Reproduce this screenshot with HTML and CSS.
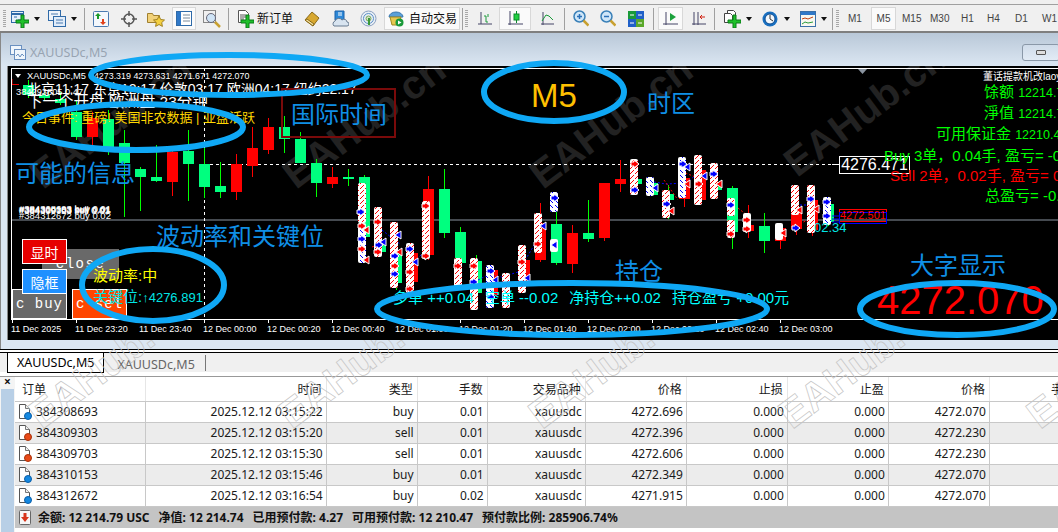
FILE: index.html
```html
<!DOCTYPE html>
<html lang="zh">
<head>
<meta charset="utf-8">
<title>XAUUSDc,M5</title>
<link rel="stylesheet" href="styles.css">
</head>
<body>
<svg class="defs" width="0" height="0">
  <defs>
    <pattern id="rh" width="5" height="5" patternUnits="userSpaceOnUse"><rect width="5" height="5" fill="#fff"/><path d="M0 3h1V2h1V1h1V0h1v1H3v1H2v1H1v1H0z" fill="#f00"/></pattern>
    <pattern id="bh" width="5" height="5" patternUnits="userSpaceOnUse"><rect width="5" height="5" fill="#fff"/><path d="M0 0h1v1h1v1h1v1H2V2H1V1H0z" fill="#00f"/></pattern>
    <path id="ab" d="M0 2h3V0l5 4-5 4V6H0z" fill="#00f" stroke="#fff"/>
    <path id="ar" d="M0 2h3V0l5 4-5 4V6H0z" fill="#f00" stroke="#fff"/>
    <path id="lb" d="M6 0v8L0 4z" fill="#00f" stroke="#fff"/>
    <path id="lr" d="M6 0v8L0 4z" fill="#f00" stroke="#fff"/>
    <symbol id="doc-b" viewBox="0 0 14 16"><path d="M1.5.5h6l4 4v8a2 2 0 0 1-2 2h-8z" fill="#fff" stroke="#555"/><path d="M7.500.5v4h4" fill="#eee" stroke="#777"/><circle cx="10" cy="12" r="3.500" fill="#1588e0" stroke="#0a5ea8"/></symbol>
    <symbol id="doc-r" viewBox="0 0 14 16"><path d="M1.5.5h6l4 4v8a2 2 0 0 1-2 2h-8z" fill="#fff" stroke="#555"/><path d="M7.500.5v4h4" fill="#eee" stroke="#777"/><circle cx="10" cy="12" r="3.500" fill="#e84a18" stroke="#a83008"/></symbol>
    <path id="plus" d="M5 0h3v5h5v3H8v5H5V8H0V5h5z" fill="#1fc02a" stroke="#0a7a18"/>
  </defs>
</svg>
<div class="app">
  <header class="toolbar">
    <span class="grip ml3"></span>
    <svg class="ml5" width="18" height="18" viewBox="0 0 18 18"><rect x=".5" y="1.500" width="12" height="11" fill="#e6f0fb" stroke="#2f6aa8"/><path d="M1 4h11" stroke="#2f6aa8" stroke-width="2"/><path d="M3 7h3M7 10h3" stroke="#2f6aa8"/><use href="#plus" x="5" y="5"/></svg>
    <span class="drop ml5"></span>
    <svg class="ml8" width="18" height="18" viewBox="0 0 18 18"><rect x=".5" y=".5" width="12" height="10" fill="#eef4fb" stroke="#2f6aa8"/><rect x="5.500" y="6.500" width="12" height="10" fill="#e0ecf9" stroke="#2f6aa8"/><path d="M3 4h7M8 10h7M8 13h7" stroke="#4a7ab0"/></svg>
    <span class="drop ml5"></span>
    <span class="sep ml7"></span>
    <svg class="ml8" width="16" height="16" viewBox="0 0 16 16"><rect x=".5" y=".5" width="15" height="15" rx="1" fill="#f4f8fc" stroke="#4a7ab0"/><path d="M5 2l3 3H6v3H4V5H2z" fill="#1a9a2a"/><path d="M10 14l-3-3h2V8h2v3h2z" fill="#e0401a"/></svg>
    <svg class="ml12" width="16" height="16" viewBox="0 0 16 16"><circle cx="8" cy="8" r="5" fill="none" stroke="#555" stroke-width="1.500"/><path d="M8 0v5M8 11v5M0 8h5M11 8h5" stroke="#555" stroke-width="1.500"/></svg>
    <svg class="ml10" width="18" height="18" viewBox="0 0 18 18"><path d="M.5 3.500h5l1 2h6v7H.5z" fill="#f2d27a" stroke="#a08030"/><path d="M12 6l1.700 3.500 3.800.5-2.800 2.600.7 3.800-3.400-1.900-3.400 1.900.7-3.800L6.500 10l3.800-.5z" fill="#f4d040" stroke="#a08020"/></svg>
    <span class="active-box ml7 w24"><svg width="16" height="15" viewBox="0 0 16 15"><rect x=".5" y=".5" width="15" height="14" fill="#fff" stroke="#2f6aa8"/><rect x="1" y="1" width="4" height="13" fill="#2f78c8"/><path d="M7 4h7M7 7h7M7 10h7" stroke="#7a8a9a"/></svg></span>
    <svg class="ml7" width="18" height="18" viewBox="0 0 18 18"><rect x=".5" y=".5" width="12" height="12" fill="#f0f0f0" stroke="#888"/><circle cx="8" cy="8" r="4.500" fill="#cfe4f6" stroke="#667"/><path d="M12 12l5 5" stroke="#c8a030" stroke-width="2.500"/></svg>
    <span class="sep ml7"></span>
    <svg class="ml8" width="17" height="18" viewBox="0 0 17 18"><path d="M1.500.5h7l3 3v9h-10z" fill="#fff" stroke="#555"/><path d="M3 5h6M3 7h6M3 9h4" stroke="#555"/><use href="#plus" x="4" y="5"/></svg>
    <span class="tb-text ml3">新订单</span>
    <svg class="ml11" width="16" height="16" viewBox="0 0 16 16"><path d="M1 9l7-8 7 6-6 8z" fill="#d8a830" stroke="#8a6a18"/><path d="M1 9l8 6 1-2-7-5z" fill="#f2e0a0" stroke="#8a6a18"/></svg>
    <svg class="ml12" width="17" height="18" viewBox="0 0 17 18"><path d="M3 1h9v9H3z" fill="#2c88d8" stroke="#1a60a8"/><path d="M6 3h4M6 5h4" stroke="#fff"/><path d="M2 16a3 3 0 0 1 1-5 4 4 0 0 1 7-1 3 3 0 0 1 5 2 2 2 0 0 1 0 4z" fill="#d8e4f0" stroke="#667a90"/></svg>
    <svg class="ml11" width="17" height="17" viewBox="0 0 17 17"><circle cx="8.500" cy="8.500" r="7.500" fill="#e8eef4" stroke="#8aa0c0"/><circle cx="8.500" cy="8.500" r="5" fill="none" stroke="#5a90c8"/><circle cx="8.500" cy="8.500" r="2.500" fill="#cfe0c0" stroke="#7aa860"/><path d="M9 8v7" stroke="#3a9a3a" stroke-width="2"/></svg>
    <span class="auto-box ml7">
      <svg width="16" height="17" viewBox="0 0 16 17"><path d="M1 7a7 5 0 0 1 14 0z" fill="#5aa0d8" stroke="#3a78b0"/><path d="M2 7l2 8h7l2-8z" fill="#e8c850" stroke="#a08a20"/><circle cx="11.500" cy="12.500" r="4" fill="#1a9a3a"/><path d="M10 10.500l3.500 2-3.500 2z" fill="#fff"/></svg>
      <span class="tb-text ml5">自动交易</span>
    </span>
    <span class="sep ml2"></span>
    <span class="grip ml2"></span>
    <svg class="ml10" width="14" height="16" viewBox="0 0 14 16"><path d="M3 1v12M0 13h14" stroke="#446" fill="none"/><path d="M6 5h2v6h2M10 3v3" stroke="#1a9a3a" fill="none"/></svg>
    <span class="active-box ml7 w32"><svg width="15" height="17" viewBox="0 0 15 17"><path d="M2 1v14M0 14h15" stroke="#446" fill="none"/><path d="M8.500 1v12" stroke="#0a8a2a"/><rect x="6" y="4" width="5" height="6" fill="#20d040" stroke="#0a8a2a"/></svg></span>
    <svg class="ml10" width="13" height="16" viewBox="0 0 13 16"><path d="M2 1v13M0 13h13" stroke="#446" fill="none"/><path d="M1 10l4-6 3 1 4 4" stroke="#1a9a3a" fill="none"/></svg>
    <span class="sep ml10"></span>
    <svg class="ml8" width="16" height="17" viewBox="0 0 16 17"><circle cx="6.500" cy="6.500" r="5.500" fill="#cfe6f8" stroke="#3a80b8" stroke-width="1.500"/><path d="M4 6.500h5M6.500 4v5" stroke="#2a70b8" stroke-width="1.500"/><path d="M10.500 10.500l5 5" stroke="#c8a030" stroke-width="2.500"/></svg>
    <svg class="ml11" width="16" height="17" viewBox="0 0 16 17"><circle cx="6.500" cy="6.500" r="5.500" fill="#cfe6f8" stroke="#3a80b8" stroke-width="1.500"/><path d="M4 6.500h5" stroke="#2a70b8" stroke-width="1.500"/><path d="M10.500 10.500l5 5" stroke="#c8a030" stroke-width="2.500"/></svg>
    <svg class="ml12" width="16" height="16" viewBox="0 0 16 16"><rect width="8" height="8" fill="#1a9a3a"/><rect x="8" width="8" height="8" fill="#2060c8"/><rect y="8" width="8" height="8" fill="#2060c8"/><rect x="8" y="8" width="8" height="8" fill="#5aa82a"/><path d="M2 4h4M10 4h4M2 12h4M10 12h4" stroke="#fff"/></svg>
    <span class="sep ml9"></span>
    <span class="active-box ml4 w25"><svg width="15" height="16" viewBox="0 0 15 16"><path d="M3 1v13M0 13h15" stroke="#446" fill="none"/><path d="M7 2l6 4-6 4z" fill="#1aa03a"/></svg></span>
    <svg class="ml9" width="14" height="16" viewBox="0 0 14 16"><path d="M2 1v13M6 1v13M0 13h14" stroke="#446" fill="none"/><path d="M13 6H9M10 4L8 6l2 2" stroke="#d02010" fill="none"/></svg>
    <span class="sep ml8"></span>
    <svg class="ml9" width="17" height="18" viewBox="0 0 17 18"><path d="M3.500.5h6l2 2v10h-8z" fill="#fff" stroke="#444"/><path d="M.5 3.500h6l2 2v7h-8z" fill="#fff" stroke="#444"/><use href="#plus" x="4" y="5"/></svg>
    <span class="drop ml5"></span>
    <svg class="ml10" width="16" height="16" viewBox="0 0 16 16"><circle cx="8" cy="8" r="7.500" fill="#1a70c0"/><circle cx="8" cy="8" r="5" fill="#f4f8fc" stroke="#0a4a90"/><path d="M8 4v4l3 2" stroke="#333" fill="none"/></svg>
    <span class="drop ml6"></span>
    <svg class="ml10" width="16" height="16" viewBox="0 0 16 16"><rect x=".5" y=".5" width="15" height="15" fill="#f8f8f0" stroke="#3a70a8"/><rect x="1" y="1" width="14" height="3" fill="#2f78c8"/><path d="M2 8l3-1 3 1 5-2" stroke="#c04010" fill="none"/><path d="M2 13l3-2 3 1 5-1" stroke="#2a9a3a" fill="none"/></svg>
    <span class="drop ml5"></span>
    <span class="sep ml5"></span>
    <span class="grip ml3"></span>
    <nav class="periods">
      <span class="per p-m1">M1</span>
      <span class="per per-on">M5</span>
      <span class="per p-m15">M15</span>
      <span class="per p-m30">M30</span>
      <span class="per p-h1">H1</span>
      <span class="per p-h4">H4</span>
      <span class="per p-d1">D1</span>
      <span class="per p-w1">W1</span>
    </nav>
  </header>

  <section class="mdi">
    <div class="titlebar">
      <svg width="16" height="15" viewBox="0 0 16 15"><rect x=".5" y=".5" width="11" height="9" fill="#f0f6fc" stroke="#6a90c0"/><rect x="4.500" y="4.500" width="11" height="10" fill="#f0f6fc" stroke="#6a90c0"/><path d="M6 11l2-2 2 3 2-3 2 2" stroke="#6a90c0" fill="none"/></svg>
      <span class="win-title">XAUUSDc,M5</span>
      <span class="win-btn"><i></i></span>
    </div>
    <div class="chart">
      <svg class="canvas" viewBox="8 66 1050 274" width="1050" height="274">
        <g class="wm-dark">
          <text transform="translate(43 190) rotate(-37)">EAHub.cn</text>
          <text transform="translate(296 190) rotate(-37)">EAHub.cn</text>
          <text transform="translate(543 190) rotate(-37)">EAHub.cn</text>
          <text transform="translate(797 178) rotate(-37)">EAHub.cn</text>
        </g>
        <path d="M11 220H1058" stroke="#8a94a0" fill="none"/>
        <path d="M204.500 68V319M204 164.500H832" stroke="#fff" stroke-dasharray="3 3" fill="none"/>
        <path d="M832 164.500h8" stroke="#fff"/>
        <path d="M858 69h9l-4.500 5z" fill="#8a94a0"/>
        <path d="M12 84.500h7M12 84V79" stroke="#e00" fill="none"/>
        <path class="wick-g" d="M28.500 80V98M44.500 92V100M60.500 92V105M76.500 100V140M108.500 110V155M124.500 130V217M140.500 167V211M156.500 145V182M188.500 130V201M204.500 148V198M220.500 162V198M284.500 116V153M300.500 132V163M316.500 159V197M348.500 169V186M364.500 175V240M380.500 235V255M396.500 240V290M444.500 169V238M460.500 227V270M476.500 255V296M556.500 208V265M588.500 200V242M668.500 185V219M732.500 186V249M764.500 213V253M828.500 200V226"/>
        <path class="wick-r" d="M92.500 112V146M172.500 150V196M236.500 154V200M252.500 127V177M268.500 118V154M332.500 167V188M412.500 245V285M428.500 176V260M492.500 265V300M524.500 255V290M540.500 203V262M572.500 225V273M604.500 183V241M620.500 160V192M684.500 175V207M700.500 165V205M748.500 205V238M780.500 225V249M796.500 200V235M812.500 195V236"/>
        <path class="body-g" d="M23 85h11v10H23zM39 95h11v3H39zM55 99h11v4H55zM71 112h11v25H71zM103 119h11v32h-11zM119 143h11v20h-11zM135 169h11v8h-11zM151 177h11v4h-11zM183 151h11v13h-11zM199 164h11v23h-11zM215 186h11v6h-11zM279 127h11v12h-11zM295 139h11v24h-11zM311 163h11v20h-11zM343 177h11v2h-11zM359 177h11v60h-11zM375 243h11v9h-11zM391 250h11v33h-11zM439 189h11v44h-11zM455 232h11v31h-11zM471 261h11v32h-11zM551 224h11v39h-11zM583 233h11v6h-11zM631 179h11v5h-11zM647 183h11v12h-11zM663 194h11v6h-11zM711 182h11v8h-11zM727 188h11v44h-11zM759 226h11v15h-11zM823 204h11v18h-11z"/>
        <path class="body-r" d="M87 118h11v19H87zM167 152h11v30h-11zM231 164h11v28h-11zM247 148h11v18h-11zM263 127h11v23h-11zM327 177h11v7h-11zM407 253h11v29h-11zM423 189h11v66h-11zM487 270h11v25h-11zM519 260h11v23h-11zM535 223h11v37h-11zM567 233h11v31h-11zM599 183h11v55h-11zM615 179h11v5h-11zM679 178h11v21h-11zM695 170h11v30h-11zM743 225h11v6h-11zM775 228h11v13h-11zM791 210h11v19h-11zM807 200h11v30h-11z"/>
        <path class="dash-b" d="M382 230l10 8 8 6M414 262l10-10M478 280l10-5 14 2 16-5 18-30M654 182l12 2 20-1 10-8M800 205h14l10 6"/>
        <path class="dash-r" d="M372 247l8-3M678 170l20 8M664 180l14 20M738 208l10 8M800 224l14-8"/>
        <g>
          <rect class="h-r" x="358" y="183" width="8" height="40" rx="2"/><rect class="h-b" x="358" y="223" width="8" height="40" rx="2"/>
          <use href="#ab" x="357" y="208"/><use href="#ar" x="358" y="222"/><use href="#lr" x="363" y="226"/><use href="#ab" x="358" y="235"/><use href="#ar" x="358" y="245"/><use href="#lr" x="363" y="256"/>
          <rect class="h-r" x="374" y="207" width="8" height="50" rx="2"/><use href="#ar" x="374" y="218"/><use href="#ab" x="375" y="241"/><use href="#lb" x="380" y="238"/><use href="#ar" x="374" y="248"/>
          <rect class="h-r" x="390" y="222" width="8" height="66" rx="2"/><use href="#lb" x="395" y="231"/><use href="#ab" x="391" y="252"/><use href="#lr" x="396" y="248"/><use href="#ar" x="391" y="262"/><use href="#ab" x="391" y="270"/>
          <rect class="h-r" x="406" y="243" width="8" height="53" rx="2"/><use href="#ab" x="406" y="245"/><use href="#lb" x="412" y="258"/><use href="#ar" x="406" y="268"/><use href="#ar" x="406" y="285"/>
          <rect class="h-r" x="422" y="201" width="8" height="58" rx="2"/><use href="#ar" x="422" y="202"/><use href="#ar" x="422" y="252"/>
          <rect class="h-r" x="454" y="258" width="8" height="29" rx="2"/><use href="#ar" x="454" y="262"/>
          <rect class="h-r" x="470" y="258" width="8" height="52" rx="2"/><use href="#ab" x="470" y="278"/><use href="#ar" x="470" y="262"/>
          <rect class="h-b" x="486" y="265" width="8" height="43" rx="2"/><use href="#ab" x="487" y="267"/><use href="#lb" x="492" y="276"/><use href="#ab" x="487" y="293"/>
          <rect class="h-r" x="502" y="273" width="8" height="35" rx="2"/>
          <rect class="h-r" x="518" y="245" width="8" height="48" rx="2"/><use href="#lb" x="524" y="274"/><use href="#ar" x="518" y="258"/>
          <rect class="h-r" x="534" y="213" width="8" height="40" rx="2"/><use href="#lb" x="540" y="222"/><use href="#ar" x="534" y="240"/>
          <rect class="h-b" x="550" y="192" width="8" height="20" rx="2"/><use href="#ab" x="551" y="194"/>
          <rect class="h-w" x="550" y="239" width="8" height="13" rx="2"/><use href="#lb" x="551" y="241"/>
          <rect class="h-r" x="630" y="159" width="8" height="36" rx="2"/><use href="#ab" x="631" y="186"/><use href="#ar" x="631" y="160"/>
          <rect class="h-b" x="646" y="177" width="8" height="19" rx="2"/><use href="#lb" x="652" y="184"/>
          <rect class="h-r" x="662" y="190" width="8" height="28" rx="2"/><use href="#ab" x="663" y="200"/><use href="#lr" x="668" y="207"/>
          <rect class="h-b" x="678" y="157" width="8" height="41" rx="2"/><use href="#ab" x="679" y="160"/><use href="#lb" x="684" y="163"/><use href="#lr" x="684" y="180"/>
          <rect class="h-r" x="694" y="155" width="8" height="50" rx="2"/><use href="#lb" x="701" y="172"/><use href="#ar" x="695" y="180"/>
          <rect class="h-r" x="710" y="163" width="8" height="36" rx="2"/><use href="#lr" x="716" y="180"/><use href="#ab" x="710" y="170"/>
          <rect class="h-r" x="727" y="198" width="8" height="18" rx="2"/><use href="#ab" x="727" y="201"/>
          <rect class="h-r" x="727" y="220" width="8" height="18" rx="2"/><use href="#ar" x="727" y="230"/>
          <rect class="h-w" x="743" y="213" width="8" height="19" rx="2"/><use href="#ar" x="743" y="216"/><use href="#ar" x="743" y="225"/>
          <rect class="h-w" x="775" y="223" width="8" height="17" rx="2"/><use href="#lr" x="780" y="229"/>
          <rect class="h-r" x="791" y="185" width="8" height="30" rx="2"/><use href="#ab" x="792" y="224"/><use href="#lr" x="796" y="206"/>
          <rect class="h-r" x="807" y="185" width="8" height="48" rx="2"/><use href="#lr" x="813" y="205"/><use href="#ab" x="807" y="195"/>
          <rect class="h-b" x="823" y="197" width="8" height="28" rx="2"/><use href="#ab" x="823" y="198"/><use href="#ab" x="823" y="212"/>
        </g>
        <path d="M832 216h8M832 219h8M832 222h8" stroke="#00f"/>
        <rect x="839.500" y="209.500" width="47" height="12" fill="none" stroke="#f00"/>
        <rect x="839.500" y="212.500" width="47" height="11" fill="none" stroke="#00f"/>
      </svg>

      <div class="frame"></div>
      <div class="lbl head"><span>XAUUSDc,M5</span><span class="ohlc">4273.319 4273.631 4271.671 4272.070</span></div>
      <div class="lbl clock">北京11:17 东京12:17 伦敦03:17 欧洲04:17 纽约22:17</div>
      <div class="lbl mini">384293805 0.47</div>
      <div class="lbl next">下一个开盘 欧洲盘 23分钟</div>
      <div class="lbl news">今日事件: 重磅! 美国非农数据 | 亚盘活跃</div>
      <div class="orders">
        <span class="ord o1">#384308693 buy 0.01</span>
        <span class="ord o2">#384309303 sell 0.01</span>
        <span class="ord o3">#384309703 sell 0.01</span>
        <span class="ord o4">#384310153 buy 0.01</span>
        <span class="ord o5">#384312672 buy 0.02</span>
      </div>
      <div class="lbl hl-price">4276.471</div>
      <div class="lbl red-price">4272.501</div>
      <div class="lbl small-cy">02.34</div>

      <button class="cbtn b-close">close</button>
      <button class="cbtn b-buy">c buy</button>
      <button class="cbtn b-sell">c sel</button>
      <button class="cbtn b-time">显时</button>
      <button class="cbtn b-frame">隐框</button>

      <div class="lbl vol">波动率:中</div>
      <div class="lbl key">关键位:<span class="key-num">↑4276.891</span></div>
      <div class="lbl pos"><span>多单 ++0.04</span><span>空单 --0.02</span><span>净持仓++0.02</span><span>持仓盈亏 +0.00元</span></div>

      <div class="panel">
        <div class="pl pl-white">董话提款机改laoyu</div>
        <div class="pl pl1">馀额 <span class="d">12214.79</span></div>
        <div class="pl pl2">淨值 <span class="d">12214.74</span></div>
        <div class="pl pl3">可用保证金 <span class="d">12210.47</span></div>
        <div class="pl pl4">Buy 3单，0.04手, 盈亏= -0.04</div>
        <div class="pl pl5">Sell 2单，0.02手, 盈亏= 0.01</div>
        <div class="pl pl6">总盈亏= -0.03</div>
      </div>

      <div class="lbl big">4272.070</div>

      <div class="lbl note n-intl">国际时间</div>
      <div class="intl-box"></div>
      <div class="lbl note n-info">可能的信息</div>
      <div class="lbl note n-vol">波动率和关键位</div>
      <div class="lbl note n-pos">持仓</div>
      <div class="lbl note n-big">大字显示</div>
      <div class="lbl note n-zone">时区</div>
      <div class="lbl n-m5">M5</div>

      <div class="axis">
        <span>11 Dec 2025</span><span>11 Dec 23:20</span><span>11 Dec 23:40</span><span>12 Dec 00:00</span><span>12 Dec 00:20</span><span>12 Dec 00:40</span><span>12 Dec 01:00</span><span>12 Dec 01:20</span><span>12 Dec 01:40</span><span>12 Dec 02:00</span><span>12 Dec 02:20</span><span>12 Dec 02:40</span><span>12 Dec 03:00</span>
      </div>
    </div>
    <div class="strip"></div>
  </section>

  <section class="lower">
    <div class="tabs">
      <span class="tab tab-on">XAUUSDc,M5</span>
      <span class="tab">XAUUSDc,M5</span>
    </div>
    <div class="terminal">
      <aside class="side"><span class="close-x">×</span><div class="side-bar"></div></aside>
      <div class="tbl-wrap">
        <table class="tbl">
          <colgroup><col class="c1"><col class="c2"><col class="c3"><col class="c4"><col class="c5"><col class="c6"><col class="c6"><col class="c6"><col class="c6"><col class="c10"></colgroup>
          <thead>
            <tr><th class="l">订单<span class="sort">/</span></th><th>时间</th><th>类型</th><th>手数</th><th>交易品种</th><th>价格</th><th>止损</th><th>止盈</th><th>价格</th><th>手数</th></tr>
          </thead>
          <tbody>
            <tr><td class="l"><svg class="doc" width="14" height="16"><use href="#doc-b"/></svg>384308693</td><td>2025.12.12 03:15:22</td><td>buy</td><td>0.01</td><td>xauusdc</td><td>4272.696</td><td>0.000</td><td>0.000</td><td>4272.070</td><td></td></tr>
            <tr><td class="l"><svg class="doc" width="14" height="16"><use href="#doc-r"/></svg>384309303</td><td>2025.12.12 03:15:20</td><td>sell</td><td>0.01</td><td>xauusdc</td><td>4272.396</td><td>0.000</td><td>0.000</td><td>4272.230</td><td></td></tr>
            <tr><td class="l"><svg class="doc" width="14" height="16"><use href="#doc-r"/></svg>384309703</td><td>2025.12.12 03:15:30</td><td>sell</td><td>0.01</td><td>xauusdc</td><td>4272.606</td><td>0.000</td><td>0.000</td><td>4272.230</td><td></td></tr>
            <tr><td class="l"><svg class="doc" width="14" height="16"><use href="#doc-b"/></svg>384310153</td><td>2025.12.12 03:15:46</td><td>buy</td><td>0.01</td><td>xauusdc</td><td>4272.349</td><td>0.000</td><td>0.000</td><td>4272.070</td><td></td></tr>
            <tr><td class="l"><svg class="doc" width="14" height="16"><use href="#doc-b"/></svg>384312672</td><td>2025.12.12 03:16:54</td><td>buy</td><td>0.02</td><td>xauusdc</td><td>4271.915</td><td>0.000</td><td>0.000</td><td>4272.070</td><td></td></tr>
          </tbody>
        </table>
        <div class="summary">
          <svg width="12" height="15" viewBox="0 0 12 15"><rect x=".5" y=".5" width="11" height="14" rx="1" fill="#f6f6f6" stroke="#666"/><path d="M4.500 3h3v4H10l-4 5-4-5h2.500z" fill="#d8341a"/></svg>
          <b>余额: 12 214.79 USC</b><b>净值: 12 214.74</b><b>已用预付款: 4.27</b><b>可用预付款: 12 210.47</b><b>预付款比例: 285906.74%</b>
        </div>
      </div>
    </div>
  </section>

  <svg class="wm-light" viewBox="0 340 1058 192" width="1058" height="192">
    <text transform="translate(42 430) rotate(-37)">EAHub.cn</text>
    <text transform="translate(292 430) rotate(-37)">EAHub.cn</text>
    <text transform="translate(542 430) rotate(-37)">EAHub.cn</text>
    <text transform="translate(792 430) rotate(-37)">EAHub.cn</text>
    <text transform="translate(1040 430) rotate(-37)">EAHub.cn</text>
  </svg>
  <svg class="ovals" viewBox="0 0 1058 532" width="1058" height="532">
    <ellipse cx="229" cy="75" rx="138" ry="20"/>
    <ellipse cx="136" cy="127" rx="107" ry="23"/>
    <ellipse cx="153" cy="285" rx="71" ry="36"/>
    <ellipse cx="554" cy="92" rx="70" ry="29"/>
    <ellipse cx="572" cy="309" rx="195" ry="26"/>
    <ellipse cx="957" cy="309" rx="97" ry="26"/>
  </svg>
</div>
</body>
</html>
```

FILE: styles.css
```css
* { box-sizing: border-box; }
html, body { margin: 0; padding: 0; }
body { width: 1058px; height: 532px; overflow: hidden; background: #fff; font-family: "Noto Sans", "Noto Sans CJK SC", sans-serif; }
.defs { position: absolute; }
.app { position: relative; width: 1058px; height: 532px; overflow: hidden; display: flex; flex-direction: column; background: #f0f0f0; }

/* toolbar */
.toolbar { flex: none; display: flex; align-items: center; background: #f0f0f0; border-top: 1px solid #a0a0a0; border-bottom: 2px solid #7f7f7f; padding-top: 1px; margin-top: 4px; height: 29px; }
.toolbar > svg { flex: none; }
.grip { width: 3px; height: 18px; flex: none; background: repeating-linear-gradient(#a8a8a8 0 1px, transparent 1px 2px); }
.drop { width: 0; height: 0; flex: none; border-left: 3.5px solid transparent; border-right: 3.5px solid transparent; border-top: 4px solid #111; }
.sep { width: 1px; height: 22px; flex: none; background: #a0a0a0; }
.active-box { height: 23px; flex: none; display: flex; align-items: center; justify-content: center; background: #fafafa; border: 1px solid #d8d8d8; }
.w24 { width: 24px; } .w25 { width: 25px; } .w32 { width: 32px; }
.auto-box { width: 76px; height: 23px; flex: none; display: flex; align-items: center; padding-left: 3px; background: #fafafa; border: 1px solid #d8d8d8; }
.tb-text { font-size: 12px; color: #111; line-height: 16px; white-space: nowrap; flex: none; }
.ml2 { margin-left: 2px; } .ml3 { margin-left: 3px; } .ml4 { margin-left: 4px; } .ml5 { margin-left: 5px; } .ml6 { margin-left: 6px; } .ml7 { margin-left: 7px; } .ml8 { margin-left: 8px; } .ml9 { margin-left: 9px; } .ml10 { margin-left: 10px; } .ml11 { margin-left: 11px; } .ml12 { margin-left: 12px; }
.periods { display: flex; align-items: center; height: 23px; flex: none; font-family: "Liberation Sans", sans-serif; font-size: 10px; color: #444; }
.per { flex: none; line-height: 23px; white-space: nowrap; }
.p-m1 { margin-left: 9px; width: 14px; }
.per-on { margin-left: 9px; width: 25px; text-align: center; background: #fafafa; border: 1px solid #d8d8d8; line-height: 21px; height: 23px; }
.p-m15 { margin-left: 6px; width: 18px; }
.p-m30 { margin-left: 10px; width: 18px; }
.p-h1 { margin-left: 13px; width: 12px; }
.p-h4 { margin-left: 14px; width: 12px; }
.p-d1 { margin-left: 16px; width: 12px; }
.p-w1 { margin-left: 15px; width: 16px; }

/* chart window */
.mdi { flex: none; height: 316px; display: flex; flex-direction: column; background: #dbe6f2; border-left: 1px solid #888; }
.titlebar { height: 33px; flex: none; display: flex; align-items: center; padding: 6px 0 0 9px; background: linear-gradient(#b9c8d8, #dbe6f2); position: relative; }
.win-title { margin-left: 4px; font-size: 12.500px; color: #98a4b2; white-space: nowrap; line-height: 16px; }
.win-btn { position: absolute; right: -2px; top: 11px; width: 38px; height: 17px; border: 1px solid #8a98a8; border-radius: 3px; background: linear-gradient(#d0dcea, #e2ebf5); display: flex; align-items: center; justify-content: center; }
.win-btn i { display: block; width: 10px; height: 5px; border: 1px solid #555; background: #ddd; border-radius: 1px; }
.chart { position: relative; flex: none; height: 274px; margin-left: 7px; background: #000; overflow: hidden; font-family: "Liberation Sans", "Noto Sans CJK SC", sans-serif; box-shadow: -1px 0 0 #888; }
.canvas { position: absolute; left: 0; top: 0; display: block; }
.frame { position: absolute; left: 3px; top: 2px; right: -2px; height: 252px; border: 1px solid #fff; }
.strip { height: 9px; flex: none; background: #dbe6f2; }
.wm-dark text { font: bold 40px "Liberation Sans", sans-serif; fill: #222; }
.wick-g { stroke: #0f0; fill: none; }
.wick-r { stroke: #f00; fill: none; }
.body-g { fill: #00ff7f; }
.body-r { fill: #f00; }
.dash-b { stroke: #00f; fill: none; stroke-dasharray: 2 2; }
.dash-r { stroke: #f00; fill: none; stroke-dasharray: 2 2; }
.h-r { fill: url(#rh); }
.h-b { fill: url(#bh); }
.h-w { fill: #fff; }

.lbl { position: absolute; white-space: nowrap; }
.head { left: 19px; top: 4px; font-size: 9.300px; line-height: 12px; color: #fff; }
.head::before { content: ""; position: absolute; left: -12px; top: 4px; border-left: 3.500px solid transparent; border-right: 3.500px solid transparent; border-top: 4px solid #fff; }
.ohlc { margin-left: 8px; font-size: 8.900px; }
.clock { left: 19px; top: 14px; font-size: 14px; line-height: 18px; color: #fff; }
.mini { left: 8px; top: 20px; font-size: 9.300px; line-height: 12px; color: #fff; }
.next { left: 19px; top: 26px; font-size: 15.500px; line-height: 20px; color: #fff; }
.news { left: 14px; top: 43px; font-size: 13px; line-height: 17px; color: #ffd700; }
.orders { position: absolute; left: 11px; top: 135px; width: 100px; height: 20px; }
.ord { position: absolute; left: 0; font-size: 9.500px; line-height: 11px; color: #fff; white-space: nowrap; }
.o1 { top: 2px; } .o2 { top: 3px; } .o3 { top: 4px; } .o4 { top: 3px; } .o5 { top: 9px; }
.hl-price { left: 831px; top: 90px; width: 71px; height: 18px; border: 1px solid #fff; background: #000; color: #fff; font-size: 16px; line-height: 16px; text-align: center; }
.red-price { left: 832px; top: 143px; font-size: 11px; line-height: 13px; color: #f00; }
.small-cy { left: 806px; top: 155px; font-size: 13px; line-height: 14px; color: #00e5e5; }

.cbtn { position: absolute; margin: 0; padding: 0; font-family: "Liberation Mono", "Noto Sans CJK SC", monospace; color: #fff; border: 1px solid #fff; text-align: center; }
.b-close { left: 34px; top: 183px; width: 77px; height: 30px; background: #696969; border-color: #696969; font-size: 14px; letter-spacing: 1.500px; }
.b-buy { left: 4px; top: 223px; width: 55px; height: 30px; background: #696969; font-size: 14px; letter-spacing: 1px; }
.b-sell { left: 64px; top: 223px; width: 55px; height: 30px; background: #ff4500; font-size: 14px; letter-spacing: 1px; }
.b-time { left: 14px; top: 173px; width: 45px; height: 25px; background: #e60000; font-size: 14px; font-family: "Noto Sans CJK SC", sans-serif; }
.b-frame { left: 14px; top: 203px; width: 45px; height: 25px; background: #1e90ff; font-size: 14px; font-family: "Noto Sans CJK SC", sans-serif; }

.vol { left: 85px; top: 200px; font-size: 15px; line-height: 20px; color: #ff0; }
.key { left: 85px; top: 221px; font-size: 15px; line-height: 20px; color: #00e5e5; }
.key-num { font-size: 13px; }
.pos { left: 385px; top: 222px; display: flex; gap: 11px; font-size: 15px; line-height: 20px; color: #00ffff; }

.panel { position: absolute; left: 876px; top: 5px; width: 300px; }
.pl { font-size: 15px; line-height: 20.200px; white-space: nowrap; color: #0f0; }
.pl-white { font-size: 10px; line-height: 11px; color: #fff; padding-left: 99px; }
.pl1 { padding-left: 100px; } .pl2 { padding-left: 100px; } .pl3 { padding-left: 52px; }
.pl4 { padding-left: 0; } .pl5 { padding-left: 6px; color: #f00; } .pl6 { padding-left: 101px; }
.d { font-size: 12.500px; }

.big { left: 869px; top: 213px; font-size: 40px; line-height: 42px; color: #f00; }
.note { font-family: "Noto Sans CJK SC", sans-serif; font-size: 24px; line-height: 30px; color: #0f8fe6; }
.n-intl { left: 283px; top: 32px; }
.intl-box { position: absolute; left: 273px; top: 22px; width: 115px; height: 50px; border: 2px solid #7a0a0a; }
.n-info { left: 7px; top: 91px; }
.n-vol { left: 148px; top: 154px; }
.n-pos { left: 607px; top: 189px; }
.n-big { left: 902px; top: 183px; }
.n-zone { left: 639px; top: 21px; }
.n-m5 { left: 523px; top: 9px; font-size: 33px; line-height: 42px; color: #ffc000; }

.axis { position: absolute; left: 3px; top: 253px; display: flex; color: #fff; font-size: 9px; line-height: 14px; height: 21px; padding-top: 3px; }
.axis span { width: 64px; flex: none; white-space: nowrap; position: relative; }
.axis span::before { content: ""; position: absolute; left: 1px; top: -3px; width: 1px; height: 4px; background: #fff; }

/* lower */
.lower { flex: 1; display: flex; flex-direction: column; min-height: 0; background: #fff; }
.tabs { height: 27px; flex: none; display: flex; align-items: flex-start; gap: 13px; background: #f0f0f0; border-top: 1px solid #000; box-shadow: inset 0 2px 0 #fff, inset 0 3px 0 #000; padding-top: 3px; padding-left: 7px; border-bottom: 4px solid #fff; }
.tab { font-size: 12.500px; line-height: 19px; color: #666; white-space: nowrap; padding: 0 10px 0 0; border-right: 1px solid #777; height: 16px; margin-top: 2px; }
.tab-on { color: #000; background: #fff; border: 1px solid #000; border-top: 0; margin-top: 0; padding: 0 9px; height: 20px; }
.terminal { flex: 1; display: flex; min-height: 0; border-top: 1px solid #999; }
.side { width: 15px; flex: none; display: flex; flex-direction: column; background: #f4f4f4; }
.close-x { font-size: 12px; line-height: 9px; height: 12px; font-weight: bold; text-align: center; color: #111; }
.side-bar { flex: 1; margin: 0 1px; background: #b8cfe6; }
.tbl-wrap { flex: 1; min-width: 0; overflow: hidden; }
.tbl { border-collapse: collapse; table-layout: fixed; width: 1065px; font-size: 12px; color: #1a1a1a; }
.c1 { width: 130px; } .c2 { width: 181px; } .c3 { width: 91px; } .c4 { width: 70px; } .c5 { width: 98px; } .c6 { width: 101px; } .c10 { width: 90px; }
.tbl th { height: 24px; padding: 0 4px 0 0; font-weight: normal; text-align: right; white-space: nowrap; border-right: 1px solid #e6e6e6; border-bottom: 1px solid #c8c8c8; background: #fff; }
.tbl td { height: 21px; padding: 0 3px 0 0; text-align: right; white-space: nowrap; border-right: 1px solid #c8c8c8; border-bottom: 1px solid #c8c8c8; line-height: 18px; }
.tbl tbody tr:nth-child(even) td { background: #ececec; }
.tbl th.l { text-align: left; padding-left: 7px; }
.tbl td.l { text-align: left; padding-left: 3px; }
.sort { margin-left: 12px; color: #888; font-size: 9px; }
.doc { vertical-align: -4px; margin-right: 4px; }
.summary { height: 21px; display: flex; align-items: center; gap: 9px; padding-left: 4px; background: #c4c4c4; font-size: 12px; color: #111; white-space: nowrap; }
.summary svg { flex: none; margin-right: -2px; }
.summary b { font-weight: bold; }

/* overlays */
.wm-light { position: absolute; left: 0; top: 340px; pointer-events: none; }
.wm-light text { font: bold 40px "Liberation Sans", sans-serif; fill: none; stroke: #c4c4c4; stroke-width: .7; }
.ovals { position: absolute; left: 0; top: 0; pointer-events: none; }
.ovals ellipse { fill: none; stroke: #0fa8f5; stroke-width: 6; }
```
